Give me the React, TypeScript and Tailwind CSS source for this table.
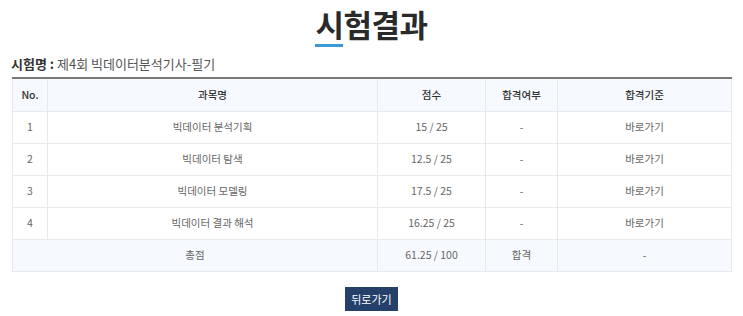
import React from "react";

const rows = [
  { no: "1", name: "빅데이터 분석기획", score: "15 / 25" },
  { no: "2", name: "빅데이터 탐색", score: "12.5 / 25" },
  { no: "3", name: "빅데이터 모델링", score: "17.5 / 25" },
  { no: "4", name: "빅데이터 결과 해석", score: "16.25 / 25" },
];

export default function App() {
  return (
    <div
      className="w-[743px] h-[316px] bg-white text-[#333]"
      style={{ fontFamily: '"Noto Sans CJK KR", "Noto Sans", sans-serif' }}
    >
      <div className="flex justify-center pt-[3px]">
        <h1 className="text-[31px] font-bold leading-[42px] text-[#2a2a2a] tracking-[-0.5px]">
          <span className="border-b-[3px] border-[#3a9ad9] inline-block leading-[41px]">시</span>
          험결과
        </h1>
      </div>
      <div className="px-[11px] mt-[8px] text-[13px] leading-[18px] text-[#555]">
        <span className="font-bold text-[#333]">시험명 :</span> 제4회 빅데이터분석기사-필기
      </div>
      <div className="px-[12px] mt-[4px]">
        <table className="w-[719px] border-collapse text-[10.5px] text-[#666] table-fixed">
          <colgroup>
            <col className="w-[35px]" />
            <col className="w-[330px]" />
            <col className="w-[108px]" />
            <col className="w-[72px]" />
            <col className="w-[174px]" />
          </colgroup>
          <thead>
            <tr className="bg-[#f6f9fe] border-t-2 border-[#7a7a7a] h-[33px]">
              <th className="border border-[#e6e9ee] border-t-[#7a7a7a] font-medium text-[#333]">No.</th>
              <th className="border border-[#e6e9ee] border-t-[#7a7a7a] font-medium text-[#333]">과목명</th>
              <th className="border border-[#e6e9ee] border-t-[#7a7a7a] font-medium text-[#333]">점수</th>
              <th className="border border-[#e6e9ee] border-t-[#7a7a7a] font-medium text-[#333]">합격여부</th>
              <th className="border border-[#e6e9ee] border-t-[#7a7a7a] font-medium text-[#333]">합격기준</th>
            </tr>
          </thead>
          <tbody>
            {rows.map((r) => (
              <tr key={r.no} className="h-[32px] text-center">
                <td className="border border-[#e6e9ee]">{r.no}</td>
                <td className="border border-[#e6e9ee]">{r.name}</td>
                <td className="border border-[#e6e9ee]">{r.score}</td>
                <td className="border border-[#e6e9ee]">-</td>
                <td className="border border-[#e6e9ee]">바로가기</td>
              </tr>
            ))}
            <tr className="h-[32px] text-center bg-[#f6f9fe]">
              <td colSpan={2} className="border border-[#e6e9ee]">총점</td>
              <td className="border border-[#e6e9ee]">61.25 / 100</td>
              <td className="border border-[#e6e9ee]">합격</td>
              <td className="border border-[#e6e9ee]">-</td>
            </tr>
          </tbody>
        </table>
      </div>
      <div className="flex justify-center mt-[15px]">
        <button className="bg-[#24406b] text-white text-[11px] h-[24px] px-[6px] leading-[24px]">
          뒤로가기
        </button>
      </div>
    </div>
  );
}
